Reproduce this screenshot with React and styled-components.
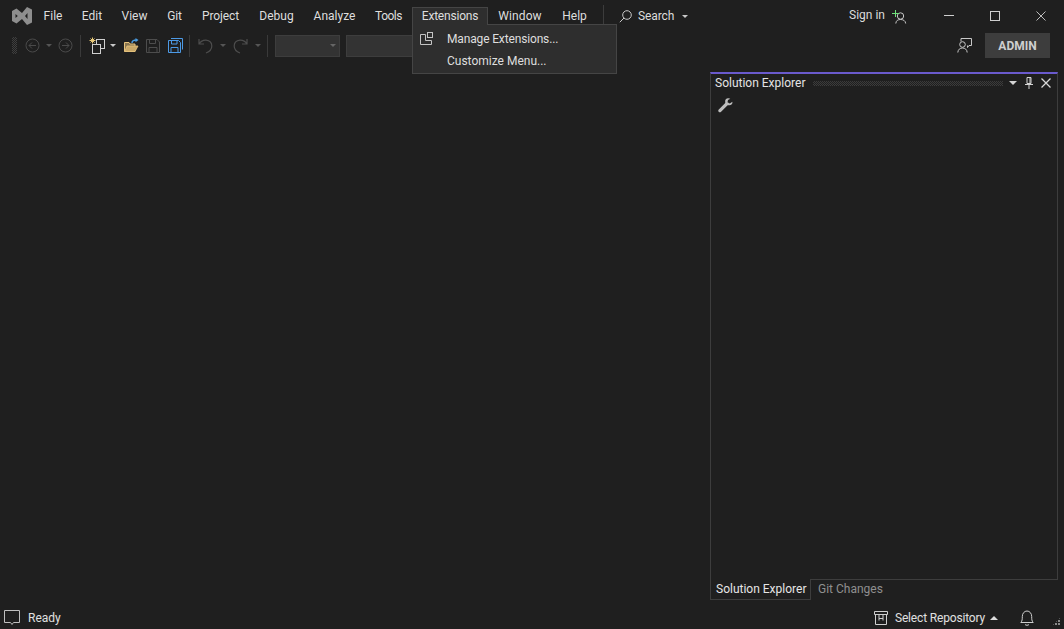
import React from "react";
import styled, { createGlobalStyle } from "styled-components";

const Global = createGlobalStyle`
  html, body { margin: 0; height: 100%; background: #1f1f1f; overflow: hidden; }
  #root { height: 100%; }
`;

const Shell = styled.div`
  position: relative;
  height: 100%;
  display: flex;
  flex-direction: column;
  background: #1f1f1f;
  color: #dcdcdc;
  font: 12px/16px Roboto, "Liberation Sans", sans-serif;
`;

const TitleBar = styled.header`
  height: 31px;
  flex: none;
  display: flex;
  align-items: stretch;
`;
const LogoBox = styled.div`
  width: 22px;
  padding-left: 12px;
  display: flex;
  align-items: center;
  margin-top: 1px;
`;
const MenuItem = styled.div`
  width: ${(p) => p.$w}px;
  height: 18px;
  margin-top: 7px;
  box-sizing: border-box;
  border-style: solid;
  border-color: ${(p) => (p.$open ? "#454545" : "transparent")};
  border-width: ${(p) => (p.$open ? "1px 1px 0 1px" : "0")};
  padding-top: ${(p) => (p.$open ? "0" : "1px")};
  background: ${(p) => (p.$open ? "#2e2e2e" : "transparent")};
  line-height: 16px;
  text-align: center;
  white-space: nowrap;
  letter-spacing: ${(p) => p.$ls || 0}px;
  position: relative;
  z-index: 3;
  color: #dedede;
`;
const TitleSep = styled.div`
  width: 1px;
  height: 22px;
  margin: 5px 9px 0 6px;
  background: #3c3c3c;
`;
const SearchBox = styled.div`
  display: flex;
  align-items: center;
  height: 18px;
  margin-top: 7px;
  margin-left: 6px;
  gap: 6px;
  letter-spacing: -0.1px;
`;
const Spacer = styled.div`
  flex: 1;
`;
const SignIn = styled.div`
  display: flex;
  align-items: center;
  gap: 7px;
  margin-right: 19px;
  height: 30px;
  color: #dcdcdc;
`;
const SignInIcon = styled.div`
  margin-top: 5px;
`;
const WinButton = styled.div`
  width: 46px;
  height: 31px;
  display: flex;
  align-items: center;
  justify-content: center;
`;

const ToolBar = styled.div`
  height: 29px;
  flex: none;
  display: flex;
  align-items: center;
  padding-left: 12px;
`;
const Gripper = styled.div`
  width: 5px;
  height: 17px;
  margin-right: 8px;
  background-image: conic-gradient(#3f3f3f 25%, transparent 0 50%, #3f3f3f 0 75%, transparent 0);
  background-size: 2px 2px;
`;
const ToolIcon = styled.div`
  width: ${(p) => p.$w || 14}px;
  height: 16px;
  margin-left: ${(p) => p.$ml || 0}px;
  display: flex;
  align-items: center;
  justify-content: center;
`;
const ToolCaret = styled.div`
  width: 0;
  height: 0;
  margin-left: ${(p) => p.$ml || 0}px;
  border-left: 3px solid transparent;
  border-right: 3px solid transparent;
  border-top: 3px solid ${(p) => p.$c || "#555"};
`;
const HeadCaret = styled.div`
  width: 0;
  height: 0;
  border-left: 4px solid transparent;
  border-right: 4px solid transparent;
  border-top: 4px solid #d4d4d4;
`;
const ToolSep = styled.div`
  width: 1px;
  height: 22px;
  margin-left: ${(p) => p.$ml}px;
  background: #3a3a3a;
`;
const Combo = styled.div`
  width: ${(p) => p.$w}px;
  height: 22px;
  margin-left: ${(p) => p.$ml}px;
  box-sizing: border-box;
  background: #333;
  border: 1px solid #3d3d3d;
  display: flex;
  align-items: center;
  justify-content: flex-end;
  padding-right: 3px;
  flex: none;
`;
const AdminBadge = styled.div`
  width: 65px;
  height: 25px;
  margin: 0 14px 0 13px;
  background: #3d3d3d;
  color: #cfcfcf;
  font-weight: 700;
  font-size: 12px;
  display: flex;
  align-items: center;
  justify-content: center;
`;

const Body = styled.main`
  flex: 1;
  min-height: 0;
  display: flex;
  justify-content: flex-end;
  padding: 12px 6px 6px 0;
`;
const Panel = styled.section`
  width: 348px;
  box-sizing: border-box;
  display: flex;
  flex-direction: column;
`;
const PanelFrame = styled.div`
  flex: 1;
  display: flex;
  flex-direction: column;
  box-sizing: border-box;
  border: 1px solid #3d3d3d;
  border-top: 2px solid #6a5acd;
`;
const PanelHead = styled.div`
  height: 18px;
  display: flex;
  align-items: center;
  padding: 0 6px 0 4px;
  color: #e4e4e4;
`;
const HeadDots = styled.div`
  flex: 1;
  height: 5px;
  margin: 0 6px 0 8px;
  background-image: conic-gradient(#3c3c3c 25%, transparent 0 50%, #3c3c3c 0 75%, transparent 0);
  background-size: 2px 2px;
`;
const HeadIcons = styled.div`
  display: flex;
  align-items: center;
  gap: 8px;
`;
const PanelTools = styled.div`
  height: 26px;
  padding-left: 7px;
  display: flex;
  align-items: center;
`;
const Tabs = styled.div`
  height: 20px;
  display: flex;
  flex: none;
`;
const Tab = styled.div`
  box-sizing: border-box;
  white-space: nowrap;
  color: #8f8f8f;
  padding: 1px 4px 0 7px;
`;
const ActiveTab = styled(Tab)`
  width: 101px;
  height: 21px;
  margin-top: -1px;
  padding: 2px 4px 0 5px;
  color: #e6e6e6;
  background: #1f1f1f;
  border: 1px solid #3d3d3d;
  border-top: 0;
  position: relative;
`;

const StatusBar = styled.footer`
  height: 23px;
  flex: none;
  display: flex;
  align-items: center;
  padding: 0 4px;
  color: #e0e0e0;
`;
const StatusIcon = styled.div`
  width: ${(p) => p.$w || 16}px;
  height: 16px;
  margin-right: ${(p) => p.$mr || 8}px;
  display: flex;
  align-items: center;
`;
const RepoLabel = styled.span`
  letter-spacing: -0.17px;
`;
const StatusCaret = styled.div`
  width: 0;
  height: 0;
  margin: 0 22px 0 5px;
  border-left: 4px solid transparent;
  border-right: 4px solid transparent;
  border-bottom: 4px solid #ddd;
`;
const BellBox = styled.div`
  width: 14px;
  height: 16px;
  margin-right: 18px;
`;
const Grip = styled.div`
  width: 9px;
  height: 9px;
  align-self: flex-end;
  margin-bottom: 3px;
  margin-right: -1px;
  background-image: radial-gradient(circle at 1px 1px, #8a8a8a 1px, transparent 1px);
  background-size: 3px 3px;
  clip-path: polygon(100% 0, 100% 100%, 0 100%);
`;

const Dropdown = styled.div`
  position: absolute;
  left: 412px;
  top: 24px;
  width: 205px;
  height: 50px;
  box-sizing: border-box;
  background: #2e2e2e;
  border: 1px solid #454545;
  padding-top: 3px;
  z-index: 2;
  color: #dedede;
`;
const DropItem = styled.div`
  height: 22px;
  display: flex;
  align-items: center;
  white-space: nowrap;
  letter-spacing: ${(p) => p.$ls || 0}px;
`;
const DropIcon = styled.div`
  width: 34px;
  padding-left: 7px;
  box-sizing: border-box;
  display: flex;
  align-items: center;
  flex: none;
`;

const Svg = styled.svg`
  display: block;
  flex: none;
`;

const Logo = () => (
  <Svg width="20" height="18" viewBox="0 0 20 18">
    <path
      fill="#8e8e8e"
      fillRule="evenodd"
      d="M4.500 1.500 10 6 15 0 20 2.500V15.500L15 18 10 12 4.500 16.500 0 14V4ZM3.500 7V11L5.800 9ZM15.500 6 13 9 15.500 12Z"
    />
  </Svg>
);
const Circle = ({ dir }) => (
  <Svg width="15" height="15" viewBox="0 0 15 15" fill="none" stroke="#4a4a4a" strokeWidth="1">
    <circle cx="7.500" cy="7.500" r="6.500" />
    <path d={dir < 0 ? "M11 7.500H4M7 4.500 4 7.500 7 10.500" : "M4 7.500H11M8 4.500 11 7.500 8 10.500"} />
  </Svg>
);
const NewProject = () => (
  <Svg width="17" height="17" viewBox="0 0 17 17" fill="none">
    <path d="M3.500 .5V6.500M.5 3.500H6.500M1.500 1.500 5.500 5.500M5.500 1.500 1.500 5.500" stroke="#e8c877" />
    <rect x="7.500" y="2.500" width="8" height="9" fill="#1f1f1f" stroke="#d0d0d0" />
    <rect x="3.500" y="7.500" width="8" height="9" fill="#1f1f1f" stroke="#d0d0d0" />
  </Svg>
);
const Folder = () => (
  <Svg width="15" height="15" viewBox="0 0 15 15" fill="none">
    <path d="M.5 13.500V4.500H5L6 6H11V13.500Z" fill="#8a7650" stroke="#e6c27c" />
    <path d="M.8 13.500 3 8H14L11 13.500Z" fill="#c9a868" stroke="#e6c27c" strokeWidth=".8" />
    <path d="M8 5C8 2.500 10 2 12.500 2" stroke="#4a9be0" strokeWidth="1.400" />
    <path d="M11.500 0 14.500 2 11.500 4.200Z" fill="#4a9be0" />
  </Svg>
);
const Save = ({ c }) => (
  <Svg width="14" height="14" viewBox="0 0 14 14" fill="none" stroke={c}>
    <path d="M.5 .5H11L13.500 3V13.500H.5Z" />
    <path d="M3.500 .5V4.500H9.500V.5M3 13.500V8.500H11V13.500" />
  </Svg>
);
const SaveAll = () => (
  <Svg width="15" height="15" viewBox="0 0 15 15" fill="none" stroke="#4c9ae6">
    <path d="M3 .5H14.500V11.500" />
    <path d="M.5 2.500H10.500L12.500 4.500V14.500H.5Z" />
    <path d="M3.500 2.500V6H9V2.500M3 14.500V9.500H10V14.500" />
  </Svg>
);
const Undo = ({ flip }) => (
  <Svg width="15" height="16" viewBox={flip ? "-15 0 15 16" : "0 0 15 16"} fill="none" stroke="#4d4d4d" strokeWidth="1.200">
    <path
      transform={flip ? "scale(-1 1)" : undefined}
      d="M1 1V6H6M1 6C3 3 5.500 2 8 2.200 11.500 2.600 13.800 5 13.800 8 13.800 11 12 13.500 8 15"
    />
  </Svg>
);
const SearchIcon = () => (
  <Svg width="13" height="13" viewBox="0 0 13 13" fill="none" stroke="#c8c8c8">
    <circle cx="8" cy="5" r="4.300" />
    <path d="M5 8 .8 12.200" />
  </Svg>
);
const PersonAdd = () => (
  <Svg width="15" height="15" viewBox="0 0 15 15" fill="none">
    <circle cx="8.500" cy="6" r="3.200" stroke="#c8c8c8" />
    <path d="M3.800 13.500C4 10.500 6 9.500 8.500 9.500S13.500 10.500 13.700 13.500" stroke="#c8c8c8" />
    <path d="M3.500 0V7M0 3.500H7" stroke="#6fe07a" />
  </Svg>
);
const Feedback = () => (
  <Svg width="15" height="15" viewBox="0 0 15 15" fill="none" stroke="#c8c8c8">
    <path d="M4 3.500V.5H14.500V7.500H12L10.500 9.500V7.500" />
    <circle cx="5.500" cy="6.500" r="2.800" />
    <path d="M.8 14.500C1 11.500 3 10 5.500 10S10 11.500 10.200 14.500" />
  </Svg>
);
const Pin = () => (
  <Svg width="8" height="12" viewBox="0 0 8 12" fill="none" stroke="#d4d4d4">
    <path d="M2 .5H6V6.500H2ZM0 7.500H8M4 7.500V12M5 1V6.500" />
  </Svg>
);
const XIcon = ({ s = 10, c = "#d8d8d8", w = 1.300 }) => (
  <Svg width={s} height={s} viewBox="0 0 10 10" fill="none" stroke={c} strokeWidth={w}>
    <path d="M.5 .5 9.500 9.500M9.500 .5 .5 9.500" />
  </Svg>
);
const Wrench = () => (
  <Svg width="15" height="15" viewBox="0 0 15 15">
    <path
      fill="#bdbdbd"
      d="M10.500 .3C8.500 0 6.800 1.800 7.200 4 7.300 4.600 7.300 5 7 5.300L.8 11.400C.1 12.100 .1 13 .7 13.700 1.400 14.400 2.400 14.400 3.100 13.700L9.400 7.500C9.700 7.200 10 7.200 10.600 7.300 13 7.700 14.800 6 14.400 3.800L11.800 5.600 9.500 4.300 10 2 12.300 .8C11.700 .5 11.100 .3 10.500 .3Z"
    />
  </Svg>
);
const Repo = () => (
  <Svg width="14" height="14" viewBox="0 0 14 14" fill="none" stroke="#cfcfcf">
    <path d="M.5 .5H13.500V3.500H.5ZM1.500 3.500V13.500H12.500V3.500M5 3.500V9.500M9 3.500V9.500M5 7.500H9" />
  </Svg>
);
const Bubble = () => (
  <Svg width="16" height="16" viewBox="0 0 16 16" fill="none" stroke="#bfbfbf">
    <path d="M.5 .5H15.500V12.500H9.500L8 14.500 6.500 12.500H.5Z" />
  </Svg>
);
const Bell = () => (
  <Svg width="14" height="16" viewBox="0 0 14 16" fill="none" stroke="#cfcfcf">
    <path d="M.8 12.500C2.300 11 2.300 9 2.300 6.500 2.300 3.500 4.300 1 7 1S11.700 3.500 11.700 6.500C11.700 9 11.700 11 13.200 12.500ZM5 14.500C6 15.500 8 15.500 9 14.500" />
  </Svg>
);
const ExtIcon = () => (
  <Svg width="14" height="14" viewBox="0 0 14 14" fill="none" stroke="#c4c4c4">
    <path d="M.5 2.500H5.500V8.500H11.500V12.500H.5Z" />
    <rect x="7.500" y=".5" width="5" height="5" />
  </Svg>
);

const MENUS = [
  { label: "File", w: 38 },
  { label: "Edit", w: 40 },
  { label: "View", w: 45 },
  { label: "Git", w: 35, ls: -0.2 },
  { label: "Project", w: 57, ls: -0.1 },
  { label: "Debug", w: 55, ls: 0.05 },
  { label: "Analyze", w: 61 },
  { label: "Tools", w: 47, ls: -0.5 },
  { label: "Extensions", w: 76, ls: -0.2, open: true },
  { label: "Window", w: 64, ls: 0.1 },
  { label: "Help", w: 45 },
];

export default function App() {
  return (
    <Shell>
      <Global />
      <TitleBar>
        <LogoBox><Logo /></LogoBox>
        {MENUS.map((m) => (
          <MenuItem key={m.label} $w={m.w} $ls={m.ls} $open={m.open}>{m.label}</MenuItem>
        ))}
        <TitleSep />
        <SearchBox>
          <SearchIcon />
          <span>Search</span>
          <ToolCaret $c="#c8c8c8" $ml={2} />
        </SearchBox>
        <Spacer />
        <SignIn>
          <span>Sign in</span>
          <SignInIcon><PersonAdd /></SignInIcon>
        </SignIn>
        <WinButton>
          <Svg width="10" height="1" viewBox="0 0 10 1"><rect width="10" height="1" fill="#cfcfcf" /></Svg>
        </WinButton>
        <WinButton>
          <Svg width="10" height="10" viewBox="0 0 10 10" fill="none" stroke="#cfcfcf"><rect x=".5" y=".5" width="9" height="9" /></Svg>
        </WinButton>
        <WinButton><XIcon c="#cfcfcf" w={0.9} /></WinButton>
      </TitleBar>

      <ToolBar>
        <Gripper />
        <ToolIcon $w={15}><Circle dir={-1} /></ToolIcon>
        <ToolCaret $ml={6} />
        <ToolIcon $w={15} $ml={6}><Circle dir={1} /></ToolIcon>
        <ToolSep $ml={7} />
        <ToolIcon $w={17} $ml={8}><NewProject /></ToolIcon>
        <ToolCaret $c="#c8c8c8" $ml={4} />
        <ToolIcon $w={15} $ml={8}><Folder /></ToolIcon>
        <ToolIcon $ml={7}><Save c="#4d4d4d" /></ToolIcon>
        <ToolIcon $w={15} $ml={8}><SaveAll /></ToolIcon>
        <ToolSep $ml={6} />
        <ToolIcon $w={15} $ml={8}><Undo /></ToolIcon>
        <ToolCaret $ml={7} />
        <ToolIcon $w={15} $ml={7}><Undo flip /></ToolIcon>
        <ToolCaret $ml={7} />
        <ToolSep $ml={6} />
        <Combo $w={65} $ml={7}><ToolCaret $c="#666" /></Combo>
        <Combo $w={120} $ml={6} />
        <Spacer />
        <Feedback />
        <AdminBadge>ADMIN</AdminBadge>
      </ToolBar>

      <Body>
        <Panel>
          <PanelFrame>
            <PanelHead>
              <span>Solution Explorer</span>
              <HeadDots />
              <HeadIcons>
                <HeadCaret />
                <Pin />
                <XIcon />
              </HeadIcons>
            </PanelHead>
            <PanelTools><Wrench /></PanelTools>
          </PanelFrame>
          <Tabs>
            <ActiveTab>Solution Explorer</ActiveTab>
            <Tab>Git Changes</Tab>
          </Tabs>
        </Panel>
      </Body>

      <StatusBar>
        <StatusIcon><Bubble /></StatusIcon>
        <span>Ready</span>
        <Spacer />
        <StatusIcon $w={14} $mr={7}><Repo /></StatusIcon>
        <RepoLabel>Select Repository</RepoLabel>
        <StatusCaret />
        <BellBox><Bell /></BellBox>
        <Grip />
      </StatusBar>

      <Dropdown>
        <DropItem $ls={-0.15}><DropIcon><ExtIcon /></DropIcon>Manage Extensions...</DropItem>
        <DropItem><DropIcon />Customize Menu...</DropItem>
      </Dropdown>
    </Shell>
  );
}
